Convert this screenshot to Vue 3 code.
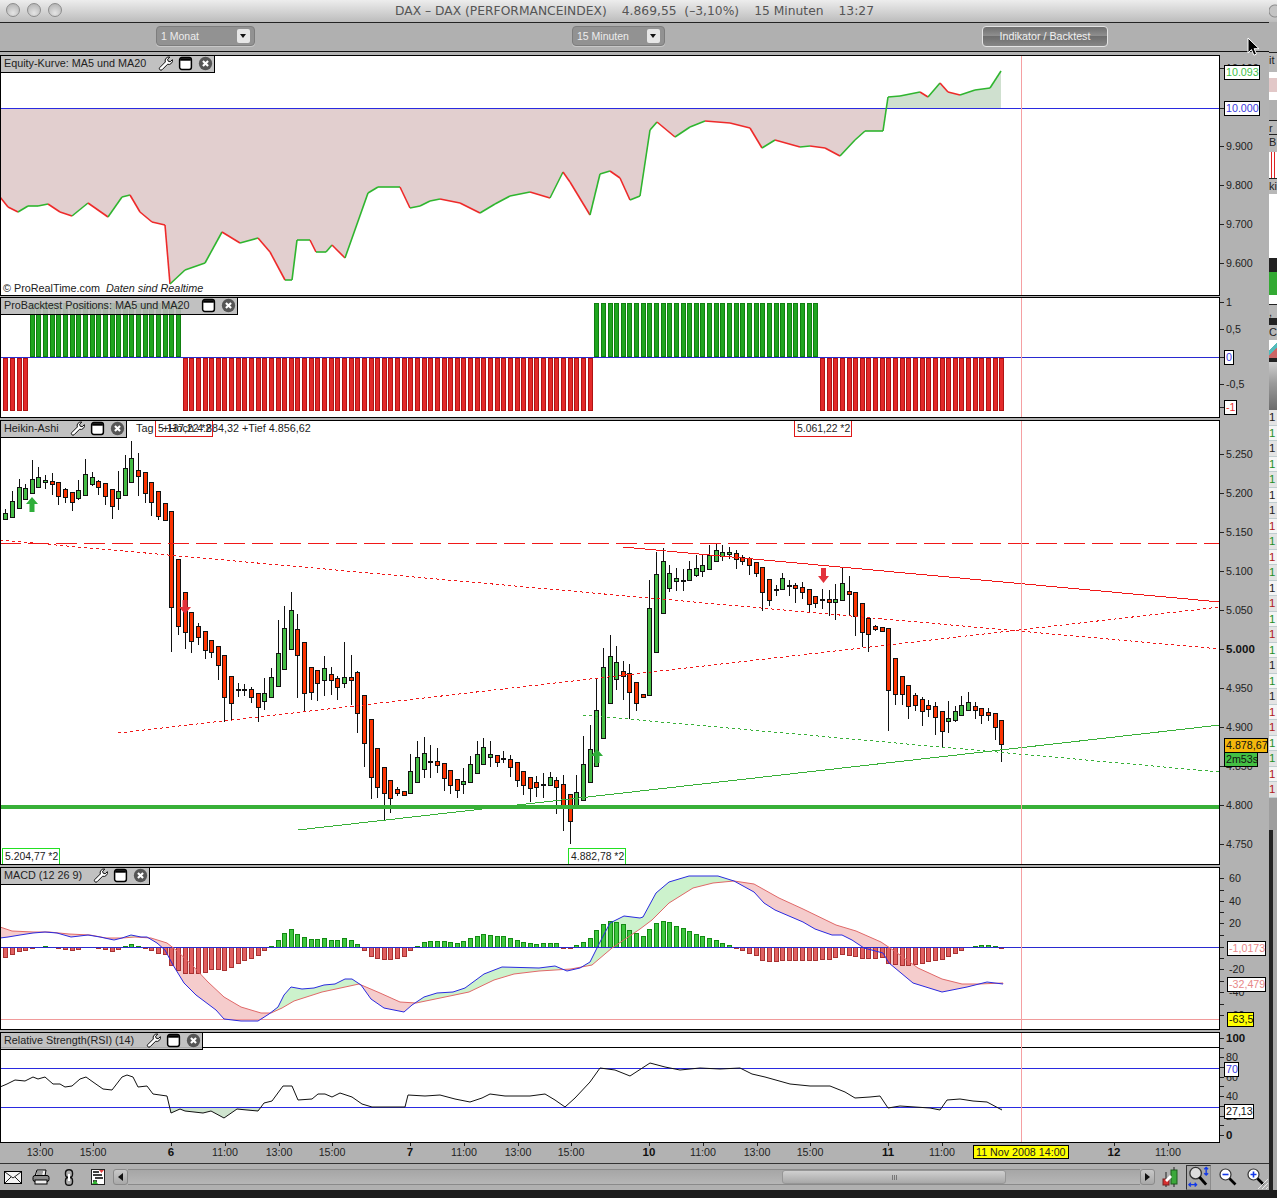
<template>
  <div class="desk">
    <svg class="defs" width="0" height="0">
      <symbol id="ic-wrench" viewBox="0 0 16 16">
        <path d="M12.6 1.2a4 4 0 0 0-4.8 5.2L1.9 12.3a1.7 1.7 0 0 0 2.4 2.4l5.9-5.9a4 4 0 0 0 5.1-4.9L13 6.2l-2.2-.7-.6-2.1z" fill="#fff" stroke="#000" />
      </symbol>
      <symbol id="ic-window" viewBox="0 0 14 14">
        <rect x="1.5" y="1.5" width="11" height="11" rx="2" fill="#fff" stroke="#000" stroke-width="1.4" />
        <rect x="2" y="2" width="10" height="2.4" fill="#000" />
      </symbol>
      <symbol id="ic-close" viewBox="0 0 14 14">
        <circle cx="7" cy="7" r="6.2" fill="#555" />
        <path d="M4.6 4.6l4.8 4.8M9.4 4.6l-4.8 4.8" stroke="#fff" stroke-width="2" />
      </symbol>
    </svg>

    <div class="window">
      <header class="titlebar">
        <div class="lights"><i></i><i></i><i></i></div>
        <div class="title">
          <span>DAX – DAX (PERFORMANCEINDEX)</span>
          <span>4.869,55 &nbsp;(–3,10%)</span>
          <span>15 Minuten</span>
          <span>13:27</span>
        </div>
      </header>

      <div class="toolbar">
        <div class="select sel-month"><span>1 Monat</span><b class="drop"></b></div>
        <div class="select sel-interval"><span>15 Minuten</span><b class="drop"></b></div>
        <button class="btn">Indikator / Backtest</button>
      </div>

      <section v-for="p in panes" :key="p.id" class="pane" :class="'pane-' + p.id">
        <div class="plot">
          <svg :width="1220" :height="p.h" :viewBox="`0 ${p.y} 1220 ${p.h}`">
            <template v-if="p.id === 'equity'">
              <clipPath id="below-line"><rect x="0" y="108" width="1220" height="190" /></clipPath>
              <clipPath id="above-line"><rect x="0" y="55" width="1220" height="53" /></clipPath>
              <polygon :points="equityArea" fill="#e2cfcf" clip-path="url(#below-line)" />
              <polygon :points="equityArea" fill="#cfe0cf" clip-path="url(#above-line)" />
              <line x1="0" y1="108.5" x2="1220" y2="108.5" stroke="#2a2ae0" />
              <line
                v-for="(s, i) in equitySegments"
                :key="i"
                :x1="s.x1"
                :y1="s.y1"
                :x2="s.x2"
                :y2="s.y2"
                :stroke="s.up ? '#2fb52f' : '#ee2a2a'"
                stroke-width="1.6"
              />
              <text x="3" y="292" class="note">© ProRealTime.com <tspan dx="3" font-style="italic">Daten sind Realtime</tspan></text>
            </template>

            <template v-if="p.id === 'positions'">
              <rect
                v-for="b in positionBars"
                :key="b.x"
                :x="b.x"
                :y="b.y"
                width="4"
                :height="b.h"
                :fill="b.up ? '#1fa51f' : '#e32a2a'"
                :stroke="b.up ? '#0f7f0f' : '#b01414'"
                shape-rendering="crispEdges"
              />
              <line x1="0" y1="357.5" x2="1220" y2="357.5" stroke="#2a2ad0" />
            </template>

            <template v-if="p.id === 'heikin'">
              <g shape-rendering="crispEdges">
                <g v-for="c in candleShapes" :key="c.x">
                  <line :x1="c.x" :y1="c.wt" :x2="c.x" :y2="c.wb" stroke="#111" />
                  <rect :x="c.x - 2" :y="c.bt" width="4" :height="c.bh" :fill="c.fill" stroke="#111" />
                </g>
                <line x1="0" y1="543.5" x2="1220" y2="543.5" stroke="#f01818" stroke-dasharray="21 7" />
                <line x1="0" y1="540" x2="1220" y2="649" stroke="#f01818" stroke-dasharray="3 3" />
                <line x1="118" y1="733" x2="1220" y2="607" stroke="#f01818" stroke-dasharray="3 3" />
                <line x1="623" y1="547" x2="1220" y2="602" stroke="#f01818" />
                <line x1="298" y1="830" x2="1220" y2="725" stroke="#38b038" />
                <line x1="583" y1="715" x2="1220" y2="772" stroke="#38b038" stroke-dasharray="3 3" />
                <rect x="0" y="805" width="1220" height="4" fill="#38b038" />
              </g>
              <polygon points="32,497 38,504 34.5,504 34.5,512 29.5,512 29.5,504 26,504" fill="#2fae3a" />
              <polygon points="597,749 603,756 599.5,756 599.5,763 594.5,763 594.5,756 591,756" fill="#2fae3a" />
              <polygon points="185,614 179,607 182.5,607 182.5,600 187.5,600 187.5,607 191,607" fill="#e3323c" />
              <polygon points="823.5,583 818,576 821,576 821,568 826,568 826,576 829,576" fill="#e3323c" />
              <text x="136" y="432" class="note">Tag &nbsp;&nbsp;+Hoch 4.884,32 +Tief 4.856,62</text>
              <g v-for="l in priceFlags" :key="l.text">
                <rect :x="l.x + 0.5" :y="l.y + 0.5" width="57" height="16" fill="none" :stroke="l.color" shape-rendering="crispEdges" />
                <text :x="l.x + 3" :y="l.y + 12" class="flag">{{ l.text }}</text>
              </g>
            </template>

            <template v-if="p.id === 'macd'">
              <path :d="macdFill.up" fill="#ccf2cc" />
              <path :d="macdFill.down" fill="#f5cccc" />
              <rect
                v-for="b in macdBars"
                :key="b.x"
                :x="b.x"
                :y="b.y"
                width="4"
                :height="b.h"
                :fill="b.up ? '#3ec63e' : '#e06060'"
                :stroke="b.up ? '#128a12' : '#a83232'"
                shape-rendering="crispEdges"
              />
              <line x1="0" y1="947.5" x2="1220" y2="947.5" stroke="#2a2ad0" />
              <line x1="0" y1="1019.5" x2="1220" y2="1019.5" stroke="#f09a9a" />
              <polyline :points="macdRedPts" fill="none" stroke="#e06868" />
              <polyline :points="macdBluePts" fill="none" stroke="#2a2ae0" />
            </template>

            <template v-if="p.id === 'rsi'">
              <clipPath id="rsi-low"><rect x="0" y="1107" width="1220" height="36" /></clipPath>
              <polygon :points="rsiArea" fill="#cfe4cf" clip-path="url(#rsi-low)" />
              <line x1="0" y1="1047.5" x2="1220" y2="1047.5" stroke="#000" />
              <line x1="0" y1="1068.5" x2="1220" y2="1068.5" stroke="#2a2ae0" />
              <line x1="0" y1="1107.5" x2="1220" y2="1107.5" stroke="#2a2ae0" />
              <polyline :points="rsiPts" fill="none" stroke="#111" />
            </template>

            <line x1="1021.5" :y1="p.y" x2="1021.5" :y2="p.y + p.h" stroke="#f5a0a2" />
            <rect x="0.5" :y="p.y + 0.5" width="1219" :height="p.h - 1" fill="none" stroke="#000" />
          </svg>

          <div class="hdr" :class="'hdr-' + p.id">
            <span>{{ p.title }}</span>
            <div class="hdr-icons">
              <svg v-if="p.wrench" width="15" height="15"><use href="#ic-wrench" /></svg>
              <svg width="15" height="15"><use href="#ic-window" /></svg>
              <svg width="15" height="15"><use href="#ic-close" /></svg>
            </div>
          </div>
        </div>

        <svg class="axis" width="49" :height="p.h" :viewBox="`1220 ${p.y} 49 ${p.h}`">
          <line v-for="m in p.minor || []" :key="m" x1="1220" :y1="m + 0.5" x2="1224" :y2="m + 0.5" stroke="#222" />
          <g v-for="t in p.ticks" :key="t[0]">
            <line x1="1220" :y1="t[1] + 0.5" x2="1224" :y2="t[1] + 0.5" stroke="#222" />
            <text :x="p.labelX || 1226" :y="t[1] + 4" class="tick" :class="{ bold: t[2] }">{{ t[0] }}</text>
          </g>
          <g v-for="g in p.tags" :key="g.text">
            <rect :x="g.x + 0.5" :y="g.y + 0.5" :width="g.w" height="14" :fill="g.bg || '#fff'" stroke="#000" shape-rendering="crispEdges" />
            <text :x="g.x + 2" :y="g.y + 11" class="tick" :style="{ fill: g.color }">{{ g.text }}</text>
          </g>
        </svg>
      </section>

      <svg class="timeaxis" width="1269" height="20" viewBox="0 1143 1269 20">
        <g v-for="t in timeTicks" :key="t[1]">
          <line :x1="t[1] + 0.5" y1="1143" :x2="t[1] + 0.5" y2="1146" stroke="#222" />
          <text :x="t[1]" y="1156" text-anchor="middle" class="tick" :class="{ bold: t[2] }">{{ t[0] }}</text>
        </g>
        <rect x="973.5" y="1145.5" width="95" height="13" fill="#ffff00" stroke="#000" shape-rendering="crispEdges" />
        <text x="976" y="1156" class="tick">11 Nov 2008 14:00</text>
      </svg>

      <footer class="tools">
        <svg class="tl-mail" width="18" height="13" viewBox="0 0 18 13">
          <rect x="0.5" y="0.5" width="17" height="12" fill="#f4f4f4" stroke="#000" />
          <path d="M1 1l8 6 8-6M1 12l6-6M17 12l-6-6" fill="none" stroke="#222" />
        </svg>
        <svg class="tl-print" width="18" height="16" viewBox="0 0 18 16">
          <path d="M5 1h9l-1 6H3z" fill="#f2f2f2" stroke="#000" />
          <rect x="1" y="6.5" width="16" height="6" rx="2" fill="#8a8a8a" stroke="#000" />
          <rect x="3" y="11" width="12" height="4" fill="#eee" stroke="#000" />
          <path d="M5 3h6M4.5 5h6" stroke="#444" />
        </svg>
        <svg class="tl-link" width="10" height="17" viewBox="0 0 10 17">
          <rect x="1.5" y="0.7" width="7" height="8" rx="3.4" fill="none" stroke="#111" stroke-width="1.4" />
          <rect x="1.5" y="8.3" width="7" height="8" rx="3.4" fill="none" stroke="#111" stroke-width="1.4" />
          <path d="M5 5v7" stroke="#fff" stroke-width="2" />
        </svg>
        <svg class="tl-report" width="14" height="16" viewBox="0 0 14 16">
          <rect x="0.5" y="0.5" width="13" height="15" fill="#fff" stroke="#222" />
          <path d="M2 3h6M2 6h9M4 9h8M2 12h4" stroke="#000" stroke-width="1.4" />
          <path d="M8 1h5L10.5 4z" fill="#e04040" />
          <path d="M1 15h6L4 11z" fill="#2fb52f" />
        </svg>
        <div class="scroll">
          <span class="scroll-btn"><i class="arrow-l"></i></span>
          <div class="track"><div class="thumb"><i></i></div></div>
          <span class="scroll-btn"><i class="arrow-r"></i></span>
        </div>
        <svg class="tl-candle" width="16" height="20" viewBox="0 0 16 20">
          <rect x="9" y="3" width="6" height="14" fill="#3ca83c" stroke="#1c5c1c" />
          <path d="M12 0v3M12 17v3M4 5v15" stroke="#222" />
          <rect x="1" y="12" width="6" height="6" fill="#d83030" stroke="#722" />
          <path d="M12 6l-3 3-1-1-5 5 2 2 5-5-1-1 3-3z" fill="#fff" />
        </svg>
        <div class="zoom-box">
          <svg width="24" height="24" viewBox="0 0 24 24">
            <circle cx="9" cy="8" r="6" fill="#ddd" stroke="#333" stroke-width="1.4" />
            <path d="M13 12l7 8" stroke="#000" stroke-width="3" />
            <path d="M20 2v8M18 4l2-2 2 2M18 8l2 2 2-2M2 20h8M4 18l-2 2 2 2M8 18l2 2-2 2" fill="none" stroke="#1238e8" stroke-width="1.4" />
          </svg>
        </div>
        <svg class="tl-out" width="18" height="18" viewBox="0 0 18 18">
          <circle cx="6.5" cy="6.5" r="5.5" fill="#fff" stroke="#333" stroke-width="1.2" />
          <path d="M3.5 6.5h6" stroke="#1238e8" stroke-width="1.6" />
          <path d="M10.5 10.5l6 6" stroke="#000" stroke-width="2.6" />
        </svg>
        <svg class="tl-in" width="18" height="18" viewBox="0 0 18 18">
          <circle cx="6.5" cy="6.5" r="5.5" fill="#fff" stroke="#333" stroke-width="1.2" />
          <path d="M3.5 6.5h6M6.5 3.5v6" stroke="#1238e8" stroke-width="1.6" />
          <path d="M10.5 10.5l6 6" stroke="#000" stroke-width="2.6" />
        </svg>
        <svg class="grip" width="12" height="12" viewBox="0 0 12 12">
          <path d="M11 1L1 11M11 5l-6 6M11 9l-2 2" stroke="#e8e8e8" />
        </svg>
      </footer>

      <svg class="cursor" width="14" height="20" viewBox="0 0 14 20">
        <path d="M1 1v15l3.5-3.4 2.4 5.6 2.6-1.1-2.4-5.4H12z" fill="#000" stroke="#fff" />
      </svg>
    </div>

    <aside class="side">
      <div class="s-title"></div>
      <div class="s-bar"></div>
      <div class="s-lab s-h20">it</div>
      <div class="s-mini"></div>
      <div class="s-bar s-h20"></div>
      <div class="s-lab s-h14">r</div>
      <div class="s-lab s-h18">B</div>
      <div class="s-stripes"></div>
      <div class="s-lab s-h16">ki</div>
      <div class="s-white"></div>
      <div class="s-green"></div>
      <div class="s-lab s-h14">,</div>
      <div class="s-dark"></div>
      <div class="s-lab s-h16">C</div>
      <div class="s-tri"></div>
      <div class="s-dark s-h4"></div>
      <div class="s-popup"></div>
      <div
        v-for="(r, i) in sideRows"
        :key="i"
        class="s-row"
        :class="['s-' + r, i % 2 ? 's-alt' : '']"
      >1</div>
      <div class="s-fade"></div>
      <div class="s-rest"></div>
      <div class="s-end"></div>
    </aside>

    <div class="foot"></div>
  </div>
</template>

<script setup>
const STEP = 6.64
const barX = (i) => Math.round(5.3 + i * STEP)

const panes = [
  {
    id: 'equity',
    y: 55,
    h: 241,
    title: 'Equity-Kurve: MA5 und MA20',
    wrench: true,
    ticks: [['10.100', 68], ['10.000', 108], ['9.900', 146], ['9.800', 185], ['9.700', 224], ['9.600', 263]],
    tags: [
      { text: '10.093', x: 1224, y: 65, w: 35, color: '#3fbf4a' },
      { text: '10.000', x: 1224, y: 101, w: 35, color: '#3a3ae0' },
    ],
  },
  {
    id: 'positions',
    y: 297,
    h: 121,
    title: 'ProBacktest Positions: MA5 und MA20',
    ticks: [['1', 302], ['0,5', 329], ['0', 357], ['-0,5', 384], ['-1', 407]],
    tags: [
      { text: '0', x: 1224, y: 350, w: 9, color: '#3a3ae0' },
      { text: '-1', x: 1224, y: 400, w: 12, color: '#e83030' },
    ],
  },
  {
    id: 'heikin',
    y: 420,
    h: 445,
    title: 'Heikin-Ashi',
    wrench: true,
    ticks: [
      ['5.250', 454], ['5.200', 493], ['5.150', 532], ['5.100', 571], ['5.050', 610],
      ['5.000', 649, true], ['4.950', 688], ['4.900', 727], ['4.850', 766], ['4.800', 805], ['4.750', 844],
    ],
    tags: [
      { text: '4.878,67', x: 1224, y: 738, w: 43, color: '#111', bg: '#f4b80c' },
      { text: '2m53s', x: 1224, y: 752, w: 33, color: '#111', bg: '#44c044' },
    ],
  },
  {
    id: 'macd',
    y: 867,
    h: 163,
    title: 'MACD (12 26 9)',
    wrench: true,
    labelX: 1229,
    minor: [890, 912, 935, 958, 981, 1004],
    ticks: [['60', 878], ['40', 901], ['20', 923], ['0', 947], ['-20', 969], ['-40', 992], ['-60', 1015]],
    tags: [
      { text: '-1,0173', x: 1227, y: 941, w: 38, color: '#e88888' },
      { text: '-32,479', x: 1227, y: 977, w: 38, color: '#e88888' },
      { text: '-63,5', x: 1227, y: 1012, w: 26, color: '#111', bg: '#ffff00' },
    ],
  },
  {
    id: 'rsi',
    y: 1032,
    h: 111,
    title: 'Relative Strength(RSI) (14)',
    wrench: true,
    minor: [1048, 1067, 1086, 1106, 1125],
    ticks: [['100', 1038, true], ['80', 1057], ['60', 1077], ['40', 1096], ['20', 1116], ['0', 1135, true]],
    tags: [
      { text: '70', x: 1224, y: 1062, w: 14, color: '#3a3ae0' },
      { text: '27,13', x: 1224, y: 1104, w: 29, color: '#111' },
    ],
  },
]

const timeTicks = [
  ['13:00', 40], ['15:00', 93], ['6', 171, true], ['11:00', 225], ['13:00', 279], ['15:00', 332],
  ['7', 410, true], ['11:00', 464], ['13:00', 518], ['15:00', 571], ['10', 649, true], ['11:00', 703],
  ['13:00', 757], ['15:00', 810], ['11', 888, true], ['11:00', 942], ['12', 1114, true], ['11:00', 1168],
]

const priceFlags = [
  { text: '5.137,22 *2', x: 155, y: 420, color: '#e01818' },
  { text: '5.061,22 *2', x: 794, y: 420, color: '#e01818' },
  { text: '5.204,77 *2', x: 2, y: 848, color: '#22e022' },
  { text: '4.882,78 *2', x: 568, y: 848, color: '#22e022' },
]

// equity curve, page coordinates
const equity = [
  [0, 197], [8, 207], [18, 212], [28, 206], [38, 206], [48, 204], [60, 212], [72, 216], [88, 203], [108, 217],
  [122, 197], [130, 195], [140, 212], [152, 222], [165, 225], [170, 284], [185, 270], [205, 263], [222, 232],
  [240, 243], [258, 238], [270, 252], [285, 280], [292, 280], [297, 240], [310, 240], [316, 252], [326, 252],
  [332, 245], [345, 258], [368, 193], [378, 187], [400, 187], [410, 208], [420, 206], [430, 201], [440, 199],
  [460, 203], [480, 213], [495, 204], [510, 196], [530, 192], [550, 198], [563, 172], [570, 182], [590, 215],
  [600, 174], [610, 171], [620, 178], [630, 200], [640, 196], [650, 130], [657, 122], [675, 137], [690, 127],
  [705, 121], [730, 123], [750, 128], [762, 148], [775, 140], [800, 147], [810, 146], [825, 148], [840, 156],
  [855, 140], [865, 131], [883, 131], [888, 97], [900, 96], [920, 92], [928, 97], [940, 83], [948, 92],
  [960, 95], [975, 90], [990, 88], [1001, 71],
]
const equityArea = `0,108 ${equity.map((p) => p.join(',')).join(' ')} 1001,108`
const equitySegments = equity.slice(1).map((p, i) => ({
  x1: equity[i][0],
  y1: equity[i][1],
  x2: p[0],
  y2: p[1],
  up: p[1] <= equity[i][1],
}))

// 0-3 short, 4-26 long, 27-88 short, 89-122 long, 123-150 short
const positionBars = []
for (let i = 0; i <= 150; i++) {
  const up = (i >= 4 && i <= 26) || (i >= 89 && i <= 122)
  positionBars.push({
    x: barX(i) - 1.5,
    y: up ? 303.5 : 358.5,
    h: up ? 53 : 52,
    up,
  })
}

// [wick top, body top, body bottom, wick bottom, g/r/d]
const candles = [
  [509, 513, 519, 519, 'g'], [491, 501, 517, 517, 'g'], [479, 487, 508, 508, 'g'], [484, 488, 499, 499, 'g'],
  [460, 479, 493, 493, 'g'], [467, 477, 487, 487, 'g'], [475, 480, 482, 489, 'g'], [473, 481, 484, 495, 'r'],
  [482, 482, 496, 505, 'r'], [488, 489, 497, 503, 'r'], [492, 492, 502, 511, 'r'], [480, 490, 498, 500, 'g'],
  [459, 474, 495, 495, 'g'], [472, 477, 484, 486, 'g'], [480, 481, 487, 495, 'r'], [483, 483, 496, 505, 'r'],
  [489, 489, 506, 519, 'r'], [471, 491, 498, 510, 'g'], [455, 468, 495, 495, 'g'], [441, 458, 482, 482, 'g'],
  [453, 470, 476, 496, 'r'], [472, 472, 493, 503, 'r'], [482, 482, 502, 516, 'r'], [491, 491, 516, 520, 'r'],
  [503, 503, 520, 520, 'r'], [511, 511, 607, 652, 'r'], [559, 559, 626, 635, 'r'], [592, 592, 632, 649, 'r'],
  [612, 612, 641, 653, 'r'], [623, 626, 637, 645, 'r'], [631, 631, 650, 659, 'r'], [640, 640, 652, 658, 'r'],
  [646, 646, 665, 680, 'r'], [655, 655, 697, 722, 'r'], [676, 676, 703, 720, 'r'], [683, 689, 690, 697, 'd'],
  [684, 689, 690, 696, 'd'], [687, 689, 697, 703, 'r'], [693, 693, 707, 722, 'r'], [678, 693, 701, 710, 'g'],
  [668, 677, 697, 698, 'g'], [620, 653, 686, 686, 'g'], [606, 628, 669, 669, 'g'], [592, 610, 649, 649, 'g'],
  [614, 629, 655, 698, 'r'], [642, 642, 693, 712, 'r'], [667, 667, 692, 700, 'r'], [670, 670, 683, 701, 'r'],
  [656, 668, 680, 696, 'g'], [667, 674, 680, 695, 'r'], [676, 678, 687, 700, 'r'], [642, 677, 683, 688, 'g'],
  [655, 677, 680, 705, 'r'], [671, 672, 713, 733, 'r'], [695, 695, 743, 767, 'r'], [719, 719, 777, 799, 'r'],
  [748, 748, 787, 798, 'r'], [767, 767, 793, 820, 'r'], [780, 780, 798, 813, 'r'], [787, 789, 793, 796, 'r'],
  [791, 791, 795, 795, 'r'], [754, 771, 793, 793, 'g'], [741, 757, 782, 782, 'g'], [737, 753, 769, 778, 'g'],
  [745, 761, 762, 778, 'd'], [748, 761, 765, 773, 'r'], [763, 763, 778, 791, 'r'], [770, 770, 785, 794, 'r'],
  [779, 779, 790, 798, 'r'], [768, 781, 784, 794, 'g'], [756, 764, 782, 782, 'g'], [741, 754, 773, 773, 'g'],
  [738, 747, 764, 764, 'g'], [741, 754, 757, 767, 'g'], [755, 755, 762, 767, 'r'], [751, 758, 759, 763, 'd'],
  [755, 759, 767, 777, 'r'], [762, 762, 780, 787, 'r'], [771, 771, 785, 795, 'r'], [777, 777, 788, 802, 'r'],
  [776, 782, 787, 797, 'r'], [773, 784, 785, 798, 'd'], [772, 777, 785, 785, 'g'], [777, 780, 787, 814, 'r'],
  [775, 784, 805, 831, 'r'], [794, 794, 821, 844, 'r'], [775, 792, 805, 809, 'g'], [736, 764, 800, 800, 'g'],
  [725, 749, 782, 782, 'g'], [679, 710, 766, 766, 'g'], [648, 667, 738, 738, 'g'], [635, 656, 703, 703, 'g'],
  [646, 662, 679, 690, 'g'], [661, 671, 676, 700, 'r'], [664, 673, 692, 719, 'r'], [682, 682, 703, 711, 'r'],
  [694, 694, 697, 697, 'r'], [580, 608, 695, 695, 'g'], [552, 574, 652, 652, 'g'], [548, 561, 613, 613, 'g'],
  [565, 573, 588, 592, 'g'], [568, 578, 581, 591, 'g'], [569, 580, 581, 591, 'd'], [561, 569, 580, 580, 'g'],
  [555, 568, 575, 577, 'g'], [554, 565, 571, 577, 'g'], [545, 555, 569, 569, 'g'], [543, 550, 561, 561, 'g'],
  [545, 552, 556, 561, 'g'], [547, 552, 554, 559, 'g'], [550, 553, 559, 569, 'r'], [555, 557, 561, 565, 'r'],
  [557, 558, 565, 575, 'r'], [562, 562, 573, 577, 'r'], [567, 567, 592, 611, 'r'], [579, 579, 600, 606, 'r'],
  [585, 589, 590, 596, 'd'], [573, 578, 589, 589, 'g'], [580, 585, 586, 596, 'd'], [583, 585, 588, 603, 'r'],
  [582, 587, 592, 599, 'r'], [589, 589, 604, 613, 'r'], [596, 596, 603, 608, 'r'], [589, 599, 600, 609, 'd'],
  [590, 599, 602, 616, 'r'], [584, 599, 602, 620, 'g'], [567, 583, 600, 600, 'g'], [576, 591, 594, 615, 'r'],
  [592, 592, 616, 636, 'r'], [603, 603, 632, 647, 'r'], [618, 618, 634, 652, 'r'], [625, 626, 629, 631, 'r'],
  [627, 627, 631, 631, 'r'], [628, 628, 690, 731, 'r'], [658, 658, 694, 705, 'r'], [676, 676, 694, 705, 'r'],
  [685, 685, 706, 719, 'r'], [693, 695, 705, 711, 'r'], [697, 699, 711, 726, 'r'], [700, 705, 709, 717, 'r'],
  [702, 706, 717, 735, 'r'], [711, 711, 731, 748, 'r'], [701, 718, 721, 733, 'g'], [706, 711, 720, 722, 'g'],
  [696, 705, 715, 715, 'g'], [692, 702, 710, 710, 'g'], [702, 706, 710, 719, 'r'], [708, 708, 715, 724, 'r'],
  [708, 712, 715, 721, 'r'], [713, 713, 727, 740, 'r'], [720, 720, 744, 762, 'r'],
]
const fills = { g: '#44bb44', r: '#fb3300', d: '#111' }
const candleShapes = candles.map((c, i) => ({
  x: barX(i) + 0.5,
  wt: c[0],
  wb: c[3],
  bt: c[1] + 0.5,
  bh: Math.max(c[2] - c[1], 1),
  fill: fills[c[4]],
}))

// MACD histogram, bar height per index in px, negative is below zero
const macdHist = [
  -10, -7, -4, -3, -1, 0, 1, 0, -1, -2, -3, -2, 0, 0, -1, -2, -4, -2, 1, 3, 1, -1, -3, -6, -7, -18, -23, -26, -26, -26,
  -25, -22, -22, -23, -20, -16, -13, -11, -8, -3, 1, 7, 14, 18, 13, 10, 8, 8, 9, 7, 7, 9, 7, 3, -3, -9, -11, -12, -12, -11,
  -9, -3, 1, 5, 6, 6, 6, 5, 4, 6, 9, 11, 13, 12, 11, 11, 9, 7, 5, 4, 3, 4, 4, 4, -1, -1, 2, 5, 9, 17,
  23, 26, 25, 23, 17, 14, 11, 18, 24, 26, 25, 21, 19, 16, 13, 11, 9, 7, 4, 2, -1, -3, -6, -8, -13, -14, -14, -13, -13, -13,
  -13, -13, -13, -12, -12, -10, -7, -8, -9, -11, -11, -11, -10, -16, -17, -18, -18, -17, -16, -14, -13, -12, -9, -6, -3, 0, 1, 2, 2, 1,
  -1,
]
const macdBars = macdHist
  .map((v, i) => ({ v, i }))
  .filter((b) => b.v !== 0)
  .map((b) => ({
    x: barX(b.i) - 1.5,
    y: b.v > 0 ? 947.5 - b.v : 947.5,
    h: Math.abs(b.v),
    up: b.v > 0,
  }))

const macdBlue = [
  [0, 938], [8, 937], [20, 935], [33, 933], [45, 932], [57, 933], [71, 937], [88, 935], [100, 937], [114, 940],
  [122, 938], [131, 935], [141, 937], [147, 937], [157, 943], [165, 950], [173, 965], [184, 983], [196, 995],
  [208, 1004], [216, 1010], [224, 1019], [241, 1021], [258, 1021], [269, 1014], [278, 1007], [284, 995], [291, 987],
  [302, 989], [314, 988], [324, 985], [335, 984], [345, 979], [352, 979], [361, 985], [371, 999], [384, 1008],
  [404, 1012], [412, 1005], [424, 997], [437, 993], [453, 992], [465, 988], [484, 974], [502, 967], [539, 968],
  [555, 966], [567, 971], [580, 968], [590, 962], [600, 942], [610, 923], [624, 916], [640, 918], [643, 917],
  [656, 893], [669, 882], [689, 876], [718, 876], [734, 881], [754, 892], [764, 903], [775, 910], [803, 922],
  [815, 929], [832, 935], [842, 935], [852, 940], [864, 948], [883, 953], [889, 963], [901, 973], [913, 983],
  [942, 992], [967, 987], [987, 982], [1003, 984],
]
const macdRed = [
  [0, 927], [12, 931], [33, 932], [49, 932], [69, 934], [90, 935], [106, 938], [122, 938], [135, 937], [151, 938],
  [167, 943], [176, 950], [192, 965], [208, 982], [224, 997], [241, 1007], [261, 1013], [271, 1013], [282, 1008],
  [294, 1001], [322, 992], [359, 984], [380, 993], [400, 1002], [416, 1003], [445, 997], [469, 992], [494, 980],
  [514, 974], [539, 971], [571, 969], [592, 965], [612, 948], [640, 929], [652, 920], [669, 903], [693, 888],
  [713, 883], [734, 881], [754, 884], [779, 898], [803, 909], [836, 925], [856, 931], [881, 942], [893, 950],
  [918, 968], [942, 979], [962, 984], [979, 984], [1003, 983],
]
const macdBluePts = macdBlue.map((p) => p.join(',')).join(' ')
const macdRedPts = macdRed.map((p) => p.join(',')).join(' ')

function valueAt(pts, x) {
  for (let i = 1; i < pts.length; i++) {
    if (x <= pts[i][0]) {
      const [x0, y0] = pts[i - 1]
      const [x1, y1] = pts[i]
      return y0 + ((y1 - y0) * (x - x0)) / (x1 - x0)
    }
  }
  return pts[pts.length - 1][1]
}

// band between the two MACD lines, split by which one is on top
const macdFill = { up: '', down: '' }
for (let x = 0; x < 1003; x += 2) {
  const b0 = valueAt(macdBlue, x)
  const r0 = valueAt(macdRed, x)
  const b1 = valueAt(macdBlue, x + 2)
  const r1 = valueAt(macdRed, x + 2)
  const d = `M${x} ${b0}L${x + 2} ${b1}L${x + 2} ${r1}L${x} ${r0}Z`
  if (b0 < r0) macdFill.up += d
  else macdFill.down += d
}

const rsi = [
  [0, 1087], [7, 1084], [15, 1080], [25, 1081], [33, 1077], [38, 1079], [45, 1077], [53, 1084], [60, 1084], [65, 1087],
  [72, 1086], [80, 1079], [86, 1077], [93, 1082], [103, 1089], [112, 1090], [122, 1077], [127, 1075], [133, 1077],
  [138, 1087], [147, 1086], [153, 1094], [167, 1096], [171, 1113], [180, 1109], [185, 1111], [203, 1113], [211, 1111],
  [224, 1118], [237, 1109], [247, 1110], [258, 1111], [264, 1103], [272, 1101], [283, 1086], [292, 1086], [298, 1100],
  [312, 1099], [318, 1094], [325, 1094], [332, 1097], [340, 1093], [352, 1097], [362, 1104], [372, 1107], [390, 1107],
  [405, 1107], [408, 1095], [425, 1096], [440, 1095], [455, 1099], [470, 1102], [482, 1098], [490, 1094], [505, 1096],
  [530, 1096], [545, 1094], [555, 1100], [565, 1107], [575, 1098], [590, 1082], [600, 1068], [615, 1070], [630, 1076],
  [650, 1063], [665, 1067], [680, 1070], [700, 1068], [720, 1069], [740, 1068], [752, 1074], [765, 1077], [790, 1084],
  [810, 1086], [830, 1086], [845, 1092], [855, 1098], [870, 1097], [880, 1096], [888, 1108], [900, 1106], [915, 1107],
  [930, 1108], [940, 1110], [947, 1100], [960, 1099], [973, 1101], [987, 1102], [1002, 1110],
]
const rsiPts = rsi.map((p) => p.join(',')).join(' ')
const rsiArea = `0,1107 ${rsiPts} 1002,1107`

const sideRows = [
  'k', 'g', 'k', 'g', 'g', 'k', 'k', 'r', 'g', 'r', 'g', 'k', 'r', 'g', 'r', 'g', 'k', 'g', 'k', 'r', 'r', 'g', 'g', 'r', 'r',
]
</script>

<style scoped>
.desk {
  position: relative;
  display: grid;
  grid-template-columns: 1269px 8px;
  grid-template-rows: 1190px 8px;
  width: 1277px;
  height: 1198px;
  overflow: hidden;
  background: #1d1d1d;
  font-family: "Liberation Sans", Arial, sans-serif;
}

.defs {
  position: absolute;
}

.window {
  grid-column: 1;
  grid-row: 1;
  position: relative;
  display: flex;
  flex-direction: column;
  background: #b2b2b2;
  overflow: hidden;
}

.titlebar {
  position: relative;
  flex: none;
  height: 22px;
  display: flex;
  align-items: center;
  justify-content: center;
  background: linear-gradient(#ededed, #bcbcbc);
  border-bottom: 1px solid #222;
  box-sizing: content-box;
}

.lights {
  position: absolute;
  left: 6px;
  top: 3px;
  display: flex;
  gap: 7px;
}

.lights i {
  width: 14px;
  height: 14px;
  border-radius: 50%;
  border: 1px solid #8c8c8c;
  box-sizing: border-box;
  background: radial-gradient(circle at 50% 75%, #e4e4e4, #adadad);
}

.title {
  display: flex;
  gap: 15px;
  font-family: "DejaVu Sans", sans-serif;
  font-size: 12.3px;
  color: #555;
  white-space: nowrap;
}

.toolbar {
  flex: none;
  height: 25px;
  padding: 3px 161px 0 156px;
  display: flex;
  align-items: flex-start;
  justify-content: space-between;
  background: #b0b0b0;
  border-bottom: 1px solid #111;
  margin-bottom: 3px;
  box-sizing: content-box;
}

.select {
  display: flex;
  align-items: center;
  justify-content: space-between;
  height: 20px;
  padding: 0 4px;
  box-sizing: border-box;
  border: 1px solid #7d7d7d;
  border-radius: 4px;
  background: #929292;
  color: #ededed;
  font-size: 10.5px;
  box-shadow: 0 1px 0 #c8c8c8;
}

.sel-month {
  width: 99px;
}

.sel-interval {
  width: 93px;
}

.drop {
  position: relative;
  width: 13px;
  height: 14px;
  border-radius: 2px;
  background: #e6e6e6;
}

.drop::after {
  content: "";
  position: absolute;
  left: 3px;
  top: 5px;
  border: 3.5px solid transparent;
  border-top: 4px solid #111;
}

.btn {
  width: 126px;
  height: 21px;
  padding: 0 0 2px;
  border: 1px solid #e4e4e4;
  border-radius: 4px;
  background: linear-gradient(#6f6f6f, #8e8e8e 45%, #6e6e6e 50%, #868686);
  color: #f0f0f0;
  font-family: inherit;
  font-size: 10.7px;
}

.pane {
  flex: none;
  display: flex;
  margin-bottom: 2px;
}

.pane-equity {
  margin-bottom: 1px;
}

.pane-rsi {
  margin-bottom: 0;
}

.plot {
  position: relative;
  width: 1220px;
  flex: none;
  background: #fff;
}

.plot > svg,
.axis,
.timeaxis {
  display: block;
  flex: none;
}

.hdr {
  position: absolute;
  left: 0;
  top: 0;
  height: 18px;
  display: flex;
  align-items: center;
  justify-content: space-between;
  padding: 0 1px 2px 3px;
  box-sizing: border-box;
  background: rgba(186, 186, 186, 0.9);
  border: 1px solid #000;
  font-size: 10.8px;
  color: #222;
  white-space: nowrap;
}

.hdr-equity {
  width: 215px;
}

.hdr-positions {
  width: 238px;
}

.hdr-heikin {
  width: 127px;
}

.hdr-macd {
  width: 150px;
}

.hdr-rsi {
  width: 203px;
}

.hdr-icons {
  display: flex;
  gap: 5px;
}

.note {
  font-size: 10.8px;
  fill: #222;
}

.flag {
  font-size: 10.4px;
  fill: #222;
}

.tick {
  font-size: 10.7px;
  fill: #222;
}

.tick.bold {
  font-weight: bold;
  font-size: 11.5px;
  fill: #111;
}

.tools {
  position: relative;
  flex: 1;
  display: flex;
  align-items: center;
  padding-left: 4px;
  border-top: 1px solid #333;
  background: #b0b0b0;
}

.tl-print {
  margin-left: 10px;
}

.tl-link {
  margin-left: 14px;
}

.tl-report {
  margin-left: 17px;
}

.scroll {
  margin-left: 8px;
  width: 1042px;
  height: 16px;
  display: flex;
}

.scroll-btn {
  flex: none;
  width: 15px;
  height: 16px;
  box-sizing: border-box;
  border: 1px solid #8a8a8a;
  border-radius: 3px;
  background: linear-gradient(#c8c8c8, #a8a8a8);
  display: flex;
  align-items: center;
  justify-content: center;
}

.arrow-l {
  border: 4px solid transparent;
  border-left: 0;
  border-right: 5px solid #111;
}

.arrow-r {
  border: 4px solid transparent;
  border-right: 0;
  border-left: 5px solid #111;
}

.track {
  flex: 1;
  padding-left: 654px;
  box-sizing: border-box;
  border-top: 1px solid #8a8a8a;
  border-bottom: 1px solid #8a8a8a;
  background: linear-gradient(#a6a6a6, #b6b6b6);
}

.thumb {
  width: 224px;
  height: 14px;
  box-sizing: border-box;
  border: 1px solid #969696;
  border-radius: 3px;
  background: linear-gradient(#d0d0d0, #a8a8a8);
  display: flex;
  align-items: center;
  justify-content: center;
}

.thumb i {
  width: 5px;
  height: 5px;
  background: repeating-linear-gradient(90deg, #777 0 1px, transparent 1px 2px);
}

.tl-candle {
  margin-left: 7px;
}

.zoom-box {
  margin-left: 8px;
  width: 25px;
  height: 25px;
  box-sizing: border-box;
  border: 1px solid #8c8c8c;
  border-top-color: #333;
  border-left-color: #333;
  background: #a8a8a8;
  display: flex;
  align-items: center;
  justify-content: center;
}

.tl-out {
  margin-left: 8px;
}

.tl-in {
  margin-left: 10px;
}

.grip {
  position: absolute;
  right: 0;
  bottom: 0;
}

.cursor {
  position: absolute;
  left: 1247px;
  top: 37px;
}

.side {
  grid-column: 2;
  grid-row: 1 / span 2;
  display: flex;
  flex-direction: column;
  overflow: hidden;
  background: #b2b2b2;
  font-size: 11px;
  color: #222;
  white-space: nowrap;
}

.side > div {
  flex: none;
  overflow: hidden;
}

.s-title {
  height: 22px;
  background: radial-gradient(circle at 6px 11px, #c4c4c4 5px, #8c8c8c 6px, transparent 7px), linear-gradient(#ededed, #bcbcbc);
}

.s-bar {
  height: 30px;
  background: #b0b0b0;
}

.s-bar.s-h20 {
  height: 20px;
}

.s-h14 {
  height: 14px;
}

.s-h16 {
  height: 16px;
}

.s-h18 {
  height: 18px;
}

.s-h20 {
  height: 20px;
}

.s-lab {
  background: #b8b8b8;
  border-top: 1px solid #222;
  box-sizing: border-box;
  line-height: 14px;
}

.s-mini {
  height: 28px;
  background: linear-gradient(#fff 20%, #e2c8c8 20% 70%, #fff 70%);
}

.s-stripes {
  height: 26px;
  background: repeating-linear-gradient(90deg, #fff 0 2px, #d22 2px 3px);
}

.s-white {
  height: 64px;
  background: #fff;
}

.s-green {
  height: 46px;
  background: linear-gradient(#222 0 30%, #3a3 30% 80%, #fff 80%);
}

.s-dark {
  height: 6px;
  background: #222;
}

.s-dark.s-h4 {
  height: 4px;
}

.s-tri {
  height: 18px;
  background: linear-gradient(135deg, #fff 40%, #5bb 40% 60%, #c66 60%);
}

.s-popup {
  height: 48px;
  background: linear-gradient(#d0d0d0, #9a9a9a 45%, #6c6c6c);
}

.s-row {
  height: 15.52px;
  line-height: 15px;
  font-size: 11.5px;
  background: #e4e4e4;
  border-bottom: 1px solid #c0cdd0;
  box-sizing: border-box;
}

.s-alt {
  background: #f5f5f5;
}

.s-k {
  color: #222;
}

.s-g {
  color: #1f8f1f;
}

.s-r {
  color: #b02020;
}

.s-fade {
  height: 32px;
  background: #9e9e9e;
}

.s-rest {
  height: 360px;
  background: linear-gradient(90deg, #222 0 4px, #aaa 4px);
}

.s-end {
  height: 8px;
  background: #1d1d1d;
}

.foot {
  grid-column: 1;
  grid-row: 2;
  background: #1d1d1d;
}
</style>
